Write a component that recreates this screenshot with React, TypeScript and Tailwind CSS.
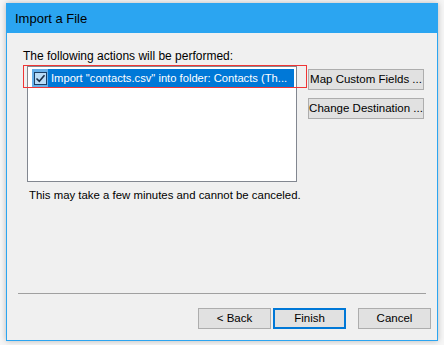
import React from 'react';

const font = { fontFamily: '"Segoe UI", "Liberation Sans", Arial, sans-serif' };

const Btn: React.FC<{ label: string; primary?: boolean; className?: string }> = ({ label, primary, className }) => (
  <div
    className={`h-[21px] flex items-center justify-center whitespace-nowrap bg-[#e1e1e1] text-[11.5px] text-black ${
      primary ? 'border-2 border-[#0078d7]' : 'border border-[#adadad]'
    } ${className ?? ''}`}
  >
    {label}
  </div>
);

export default function App() {
  return (
    <div className="w-[444px] h-[345px] bg-[#f6f6f6] pt-[3px] pl-[6px] overflow-hidden" style={font}>
      <div className="w-[432px] h-[338px] border border-[#2ba5f1] bg-[#f0f0f0] flex flex-col shadow-[0_0_6px_rgba(0,0,0,0.25)]">
        {/* title bar */}
        <div className="h-[29px] bg-[#2ba5f1] flex items-center pl-[8px] text-[13px] text-black">Import a File</div>

        {/* body */}
        <div className="flex-1 flex flex-col pl-[16px] pt-[15px]">
          <div className="text-[12px] leading-[16px] text-black">The following actions will be performed:</div>

          <div className="flex mt-[2px]">
            <div className="relative w-[270px] h-[116px] ml-[4px] bg-white border border-[#828790] pt-[2px] pl-[4px]">
              <div className="flex h-[18px] w-[262px]">
                <div className="w-[16px] h-[18px] bg-[#66afe9] flex items-center justify-center">
                  <div className="w-[13px] h-[13px] border border-[#1a3f66] bg-[#b9dcf7] flex items-center justify-center">
                    <svg width="11" height="11" viewBox="0 0 11 11">
                      <path d="M1.5 5.5 L4.3 8.3 L9.5 2.3" fill="none" stroke="#1a2f48" strokeWidth="1.6" />
                    </svg>
                  </div>
                </div>
                <div className="flex-1 bg-[#0078d7] text-white text-[11.2px] leading-[18px] pl-[3px] whitespace-nowrap overflow-hidden">
                  Import "contacts.csv" into folder: Contacts (Th...
                </div>
              </div>
              {/* red highlight annotation */}
              <div className="absolute left-[-5px] top-[-2px] w-[284px] h-[23px] border border-[#f03535]" />
            </div>

            <div className="flex flex-col gap-[8px] ml-[11px] mt-[3px]">
              <Btn label="Map Custom Fields ..." className="w-[116px]" />
              <Btn label="Change Destination ..." className="w-[116px]" />
            </div>
          </div>

          <div className="text-[11.4px] leading-[16px] text-black mt-[5px] ml-[6px]">
            This may take a few minutes and cannot be canceled.
          </div>
        </div>

        {/* footer */}
        <div className="mx-[11px] h-px bg-[#a0a0a0]" />
        <div className="flex justify-end pr-[6px] pt-[14px] pb-[11px]">
          <Btn label="< Back" className="w-[73px]" />
          <Btn label="Finish" primary className="w-[73px] ml-[2px]" />
          <Btn label="Cancel" className="w-[73px] ml-[12px]" />
        </div>
      </div>
    </div>
  );
}
